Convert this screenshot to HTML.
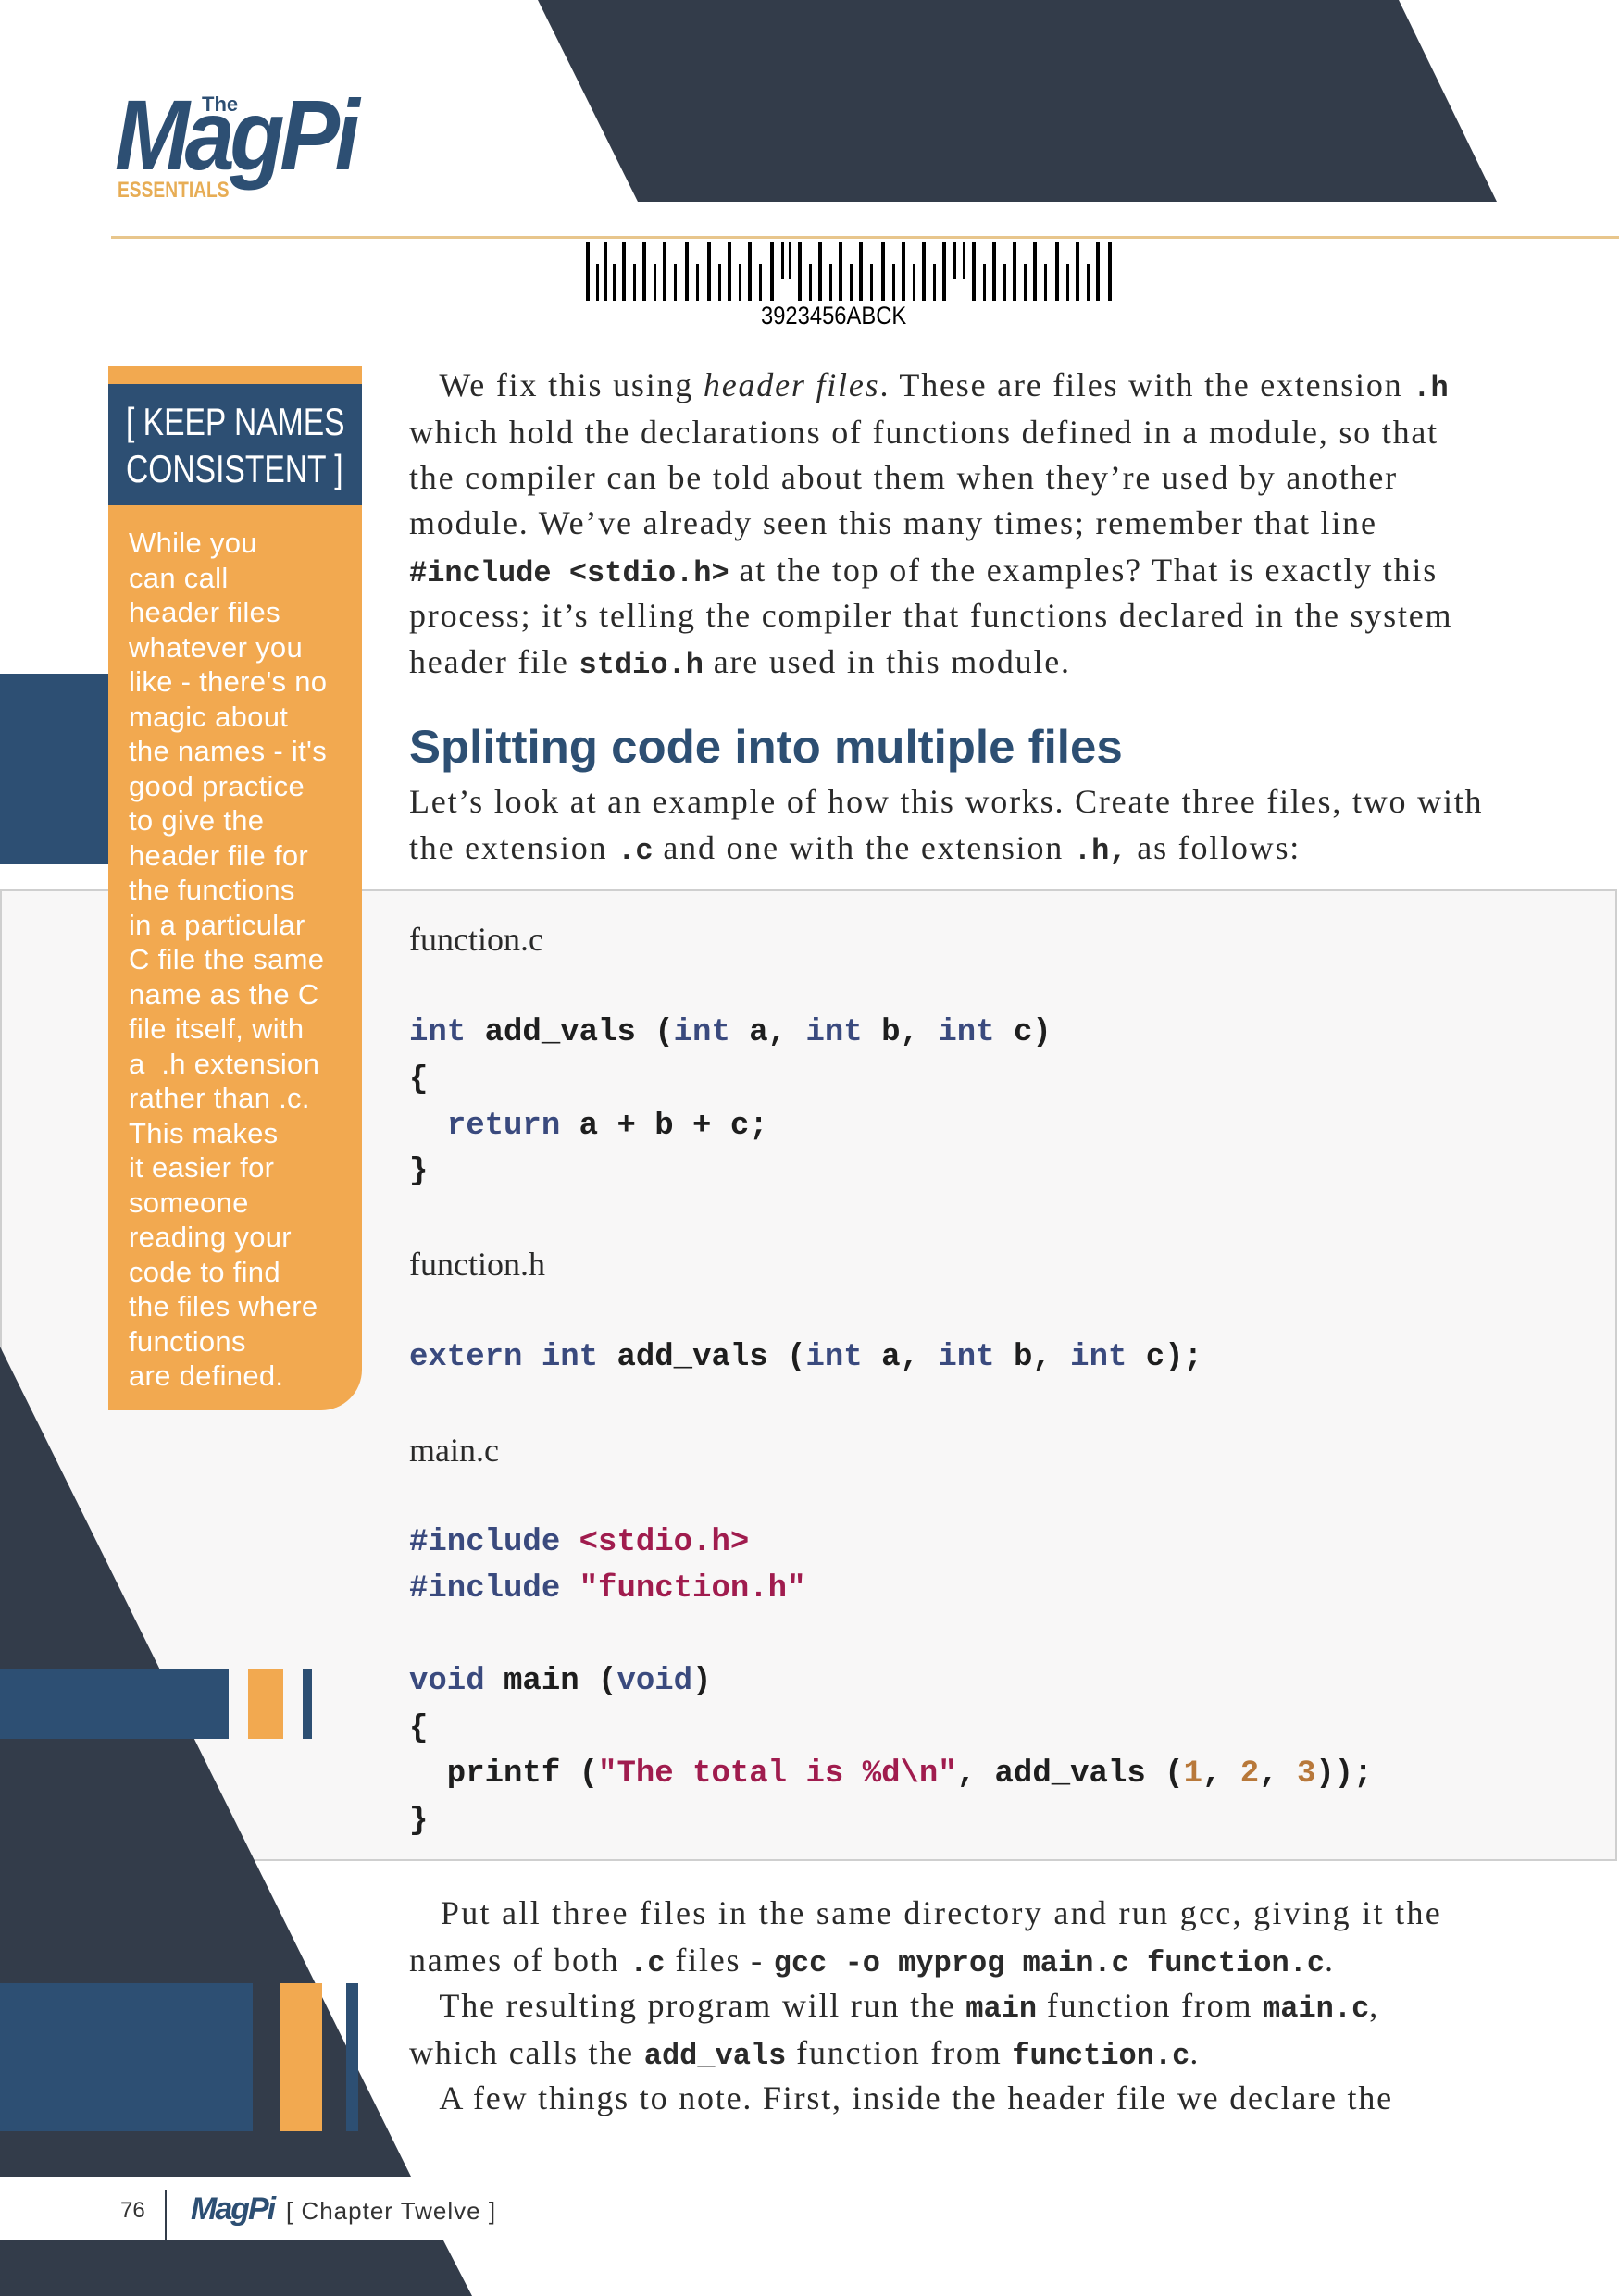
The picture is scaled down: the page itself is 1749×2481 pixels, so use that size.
<!DOCTYPE html>
<html><head><meta charset="utf-8"><style>
*{margin:0;padding:0;box-sizing:border-box}
body{width:1749px;height:2481px;position:relative;overflow:hidden;background:#fff}
.a{position:absolute;white-space:nowrap}
.t{font-family:"Liberation Serif",serif;font-size:36px;letter-spacing:1.8px;line-height:50px;color:#2a2a2a;left:442px}
.m{font-family:"Liberation Mono",monospace;font-weight:bold;font-size:32px;letter-spacing:0}
.c{font-family:"Liberation Mono",monospace;font-size:34px;line-height:50px;color:#1e1e1e;left:442px;font-weight:bold}
.k{color:#3a4a7e}.s{color:#a01c4e}.n{color:#b8783a}
.sb{font-family:"Liberation Sans",sans-serif;font-size:31px;line-height:37.5px;color:#fff;left:139px;letter-spacing:0.3px}
</style></head><body>
<div class="a" style="left:0;top:961px;width:1747px;height:1050px;background:#f8f7f7;border:2px solid #cfcfcf"></div>
<svg class="a" style="left:0;top:0" width="1749" height="2481">
<polygon points="581,0 1511,0 1617,218 689,218" fill="#333c4a"/>
<rect x="120" y="255" width="1629" height="3" fill="#e8c68c"/>
<rect x="0" y="728" width="118" height="206" fill="#2d4f73"/>
<polygon points="0,1455 444,2352 0,2352" fill="#333c4a"/>
<rect x="0" y="1804" width="247" height="75" fill="#2d4f73"/>
<rect x="268" y="1804" width="38" height="75" fill="#f2a950"/>
<rect x="327" y="1804" width="10" height="75" fill="#2d4f73"/>
<rect x="0" y="2143" width="273" height="160" fill="#2d4f73"/>
<rect x="302" y="2143" width="46" height="160" fill="#f2a950"/>
<rect x="374" y="2143" width="13" height="160" fill="#2d4f73"/>
<polygon points="0,2421 479,2421 510,2481 0,2481" fill="#333c4a"/>
<rect x="178" y="2366" width="2" height="115" fill="#333c4a"/>
<g fill="#000">
<rect x="633" y="262" width="4" height="63"/><rect x="644" y="285" width="3" height="40"/><rect x="652" y="262" width="4" height="63"/><rect x="662" y="285" width="3" height="40"/><rect x="672" y="262" width="4" height="63"/><rect x="684" y="285" width="3" height="40"/><rect x="694" y="262" width="4" height="63"/><rect x="706" y="285" width="3" height="40"/><rect x="716" y="262" width="4" height="63"/><rect x="728" y="285" width="3" height="40"/><rect x="740" y="262" width="4" height="63"/><rect x="752" y="285" width="3" height="40"/><rect x="764" y="262" width="4" height="63"/><rect x="776" y="285" width="3" height="40"/><rect x="786" y="262" width="4" height="63"/><rect x="798" y="285" width="3" height="40"/><rect x="808" y="262" width="4" height="63"/><rect x="820" y="285" width="3" height="40"/><rect x="832" y="262" width="4" height="63"/><rect x="844" y="262" width="3" height="40"/><rect x="852" y="262" width="3" height="40"/><rect x="862" y="262" width="4" height="63"/><rect x="874" y="285" width="3" height="40"/><rect x="884" y="262" width="4" height="63"/><rect x="896" y="285" width="3" height="40"/><rect x="906" y="262" width="4" height="63"/><rect x="918" y="285" width="3" height="40"/><rect x="928" y="262" width="4" height="63"/><rect x="940" y="285" width="3" height="40"/><rect x="952" y="262" width="4" height="63"/><rect x="964" y="285" width="3" height="40"/><rect x="974" y="262" width="4" height="63"/><rect x="986" y="285" width="3" height="40"/><rect x="996" y="262" width="4" height="63"/><rect x="1008" y="285" width="3" height="40"/><rect x="1018" y="262" width="4" height="63"/><rect x="1030" y="262" width="3" height="40"/><rect x="1040" y="262" width="3" height="40"/><rect x="1050" y="262" width="4" height="63"/><rect x="1062" y="285" width="3" height="40"/><rect x="1072" y="262" width="4" height="63"/><rect x="1084" y="285" width="3" height="40"/><rect x="1094" y="262" width="4" height="63"/><rect x="1106" y="285" width="3" height="40"/><rect x="1116" y="262" width="4" height="63"/><rect x="1128" y="285" width="3" height="40"/><rect x="1140" y="262" width="4" height="63"/><rect x="1152" y="285" width="3" height="40"/><rect x="1162" y="262" width="4" height="63"/><rect x="1174" y="285" width="3" height="40"/><rect x="1184" y="262" width="4" height="63"/><rect x="1197" y="262" width="4" height="63"/>
</g>
</svg>
<div class="a" style="left:822px;top:326px;font-family:'Liberation Sans',sans-serif;font-size:27px;color:#000;transform:scaleX(0.88);transform-origin:left">3923456ABCK</div>
<div class="a" style="left:124px;top:86px;font-family:'Liberation Sans',sans-serif;font-weight:bold;font-style:italic;font-size:108px;color:#2d4f73;letter-spacing:-6px;line-height:120px;transform:scaleX(0.9);transform-origin:left">MagPi</div>
<div class="a" style="left:218px;top:100px;font-family:'Liberation Sans',sans-serif;font-weight:bold;font-size:22px;color:#2d4f73">The</div>
<div class="a" style="left:127px;top:192px;font-family:'Liberation Sans',sans-serif;font-weight:bold;font-size:24px;color:#e7ad55;transform:scaleX(0.8);transform-origin:left">ESSENTIALS</div>
<div class="a" style="left:117px;top:396px;width:274px;height:1128px;background:#f2a950;border-bottom-right-radius:44px"></div>
<div class="a" style="left:117px;top:415px;width:274px;height:131px;background:#2d4f73"></div>
<div class="a" style="left:136px;top:430px;font-family:'Liberation Sans',sans-serif;font-size:42px;line-height:51px;color:#fff;transform:scaleX(0.8);transform-origin:left">[ KEEP NAMES<br>CONSISTENT ]</div>
<div class="a sb" style="top:568px">While you<br>can call<br>header files<br>whatever you<br>like - there's no<br>magic about<br>the names - it's<br>good practice<br>to give the<br>header file for<br>the functions<br>in a particular<br>C file the same<br>name as the C<br>file itself, with<br>a &nbsp;.h extension<br>rather than .c.<br>This makes<br>it easier for<br>someone<br>reading your<br>code to find<br>the files where<br>functions<br>are defined.</div>
<div class="a t" style="top:391px">&nbsp;&nbsp;&nbsp;We fix this using <i>header files</i>. These are files with the extension <span class="m">.h</span></div>
<div class="a t" style="top:442px">which hold the declarations of functions defined in a module, so that</div>
<div class="a t" style="top:491px">the compiler can be told about them when they’re used by another</div>
<div class="a t" style="top:540px">module. We’ve already seen this many times; remember that line</div>
<div class="a t" style="top:591px"><span class="m">#include &lt;stdio.h&gt;</span> at the top of the examples? That is exactly this</div>
<div class="a t" style="top:640px">process; it’s telling the compiler that functions declared in the system</div>
<div class="a t" style="top:690px">header file <span class="m">stdio.h</span> are used in this module.</div>
<div class="a" style="left:442px;top:778px;font-family:'Liberation Sans',sans-serif;font-weight:bold;font-size:50px;color:#2d4f73;transform:scaleX(1.02);transform-origin:left">Splitting code into multiple files</div>
<div class="a t" style="top:841px">Let’s look at an example of how this works. Create three files, two with</div>
<div class="a t" style="top:891px">the extension <span class="m">.c</span> and one with the extension <span class="m">.h,</span> as follows:</div>
<div class="a t" style="top:990px;letter-spacing:0">function.c</div>
<div class="a c" style="top:1091px"><span class="k">int</span> add_vals (<span class="k">int</span> a, <span class="k">int</span> b, <span class="k">int</span> c)</div>
<div class="a c" style="top:1142px">{</div>
<div class="a c" style="top:1192px">&nbsp;&nbsp;<span class="k">return</span> a + b + c;</div>
<div class="a c" style="top:1241px">}</div>
<div class="a t" style="top:1341px;letter-spacing:0">function.h</div>
<div class="a c" style="top:1442px"><span class="k">extern int</span> add_vals (<span class="k">int</span> a, <span class="k">int</span> b, <span class="k">int</span> c);</div>
<div class="a t" style="top:1542px;letter-spacing:0">main.c</div>
<div class="a c" style="top:1642px"><span class="k">#include</span> <span class="s">&lt;stdio.h&gt;</span></div>
<div class="a c" style="top:1692px"><span class="k">#include</span> <span class="s">"function.h"</span></div>
<div class="a c" style="top:1792px"><span class="k">void</span> main (<span class="k">void</span>)</div>
<div class="a c" style="top:1843px">{</div>
<div class="a c" style="top:1892px">&nbsp;&nbsp;printf (<span class="s">"The total is %d\n"</span>, add_vals (<span class="n">1</span>, <span class="n">2</span>, <span class="n">3</span>));</div>
<div class="a c" style="top:1943px">}</div>
<div class="a t" style="top:2042px;letter-spacing:2.3px">&nbsp;&nbsp;&nbsp;Put all three files in the same directory and run gcc, giving it the</div>
<div class="a t" style="top:2093px">names of both <span class="m">.c</span> files - <span class="m">gcc -o myprog main.c function.c</span>.</div>
<div class="a t" style="top:2142px">&nbsp;&nbsp;&nbsp;The resulting program will run the <span class="m">main</span> function from <span class="m">main.c</span>,</div>
<div class="a t" style="top:2193px">which calls the <span class="m">add_vals</span> function from <span class="m">function.c</span>.</div>
<div class="a t" style="top:2242px">&nbsp;&nbsp;&nbsp;A few things to note. First, inside the header file we declare the</div>
<div class="a" style="left:130px;top:2375px;font-family:'Liberation Sans',sans-serif;font-size:24px;color:#333">76</div>
<div class="a" style="left:206px;top:2368px;font-family:'Liberation Sans',sans-serif;font-weight:bold;font-style:italic;font-size:34px;color:#2d4f73;letter-spacing:-2px">MagPi</div>
<div class="a" style="left:309px;top:2374px;font-family:'Liberation Sans',sans-serif;font-size:26px;color:#333;letter-spacing:1px">[ Chapter Twelve ]</div>
</body></html>
